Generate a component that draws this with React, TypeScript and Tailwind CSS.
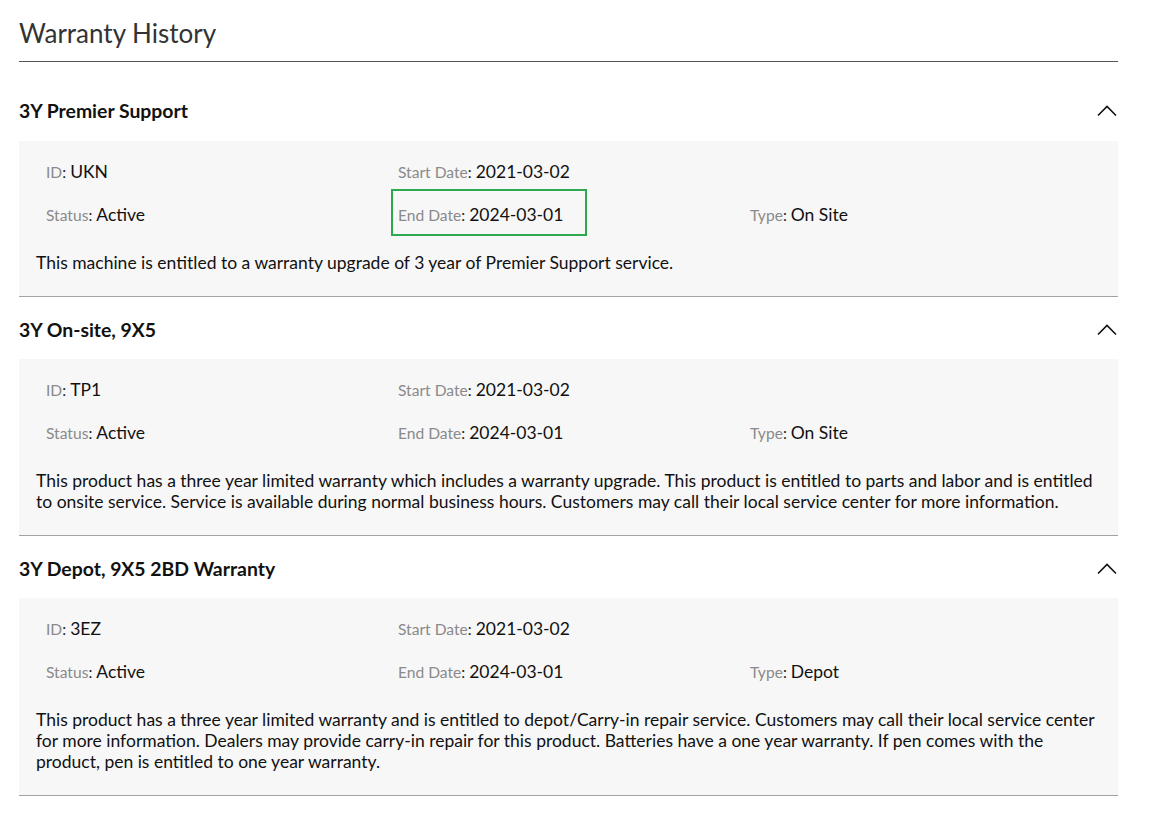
type Warranty = {
  name: string;
  id: string;
  status: string;
  start: string;
  end: string;
  type: string;
  text: string;
  highlight?: boolean;
};

const warranties: Warranty[] = [
  {
    name: "3Y Premier Support",
    id: "UKN",
    status: "Active",
    start: "2021-03-02",
    end: "2024-03-01",
    type: "On Site",
    text: "This machine is entitled to a warranty upgrade of 3 year of Premier Support service.",
    highlight: true,
  },
  {
    name: "3Y On-site, 9X5",
    id: "TP1",
    status: "Active",
    start: "2021-03-02",
    end: "2024-03-01",
    type: "On Site",
    text: "This product has a three year limited warranty which includes a warranty upgrade. This product is entitled to parts and labor and is entitled to onsite service. Service is available during normal business hours. Customers may call their local service center for more information.",
  },
  {
    name: "3Y Depot, 9X5 2BD Warranty",
    id: "3EZ",
    status: "Active",
    start: "2021-03-02",
    end: "2024-03-01",
    type: "Depot",
    text: "This product has a three year limited warranty and is entitled to depot/Carry-in repair service. Customers may call their local service center for more information. Dealers may provide carry-in repair for this product. Batteries have a one year warranty. If pen comes with the product, pen is entitled to one year warranty.",
  },
];

function Field({ label, value }: { label: string; value: string }) {
  return (
    <div className="h-6 leading-6 whitespace-nowrap">
      <span className="text-[15.6px] text-[#8a8a8a]">{label}</span>
      <span className="text-[15.6px] text-[#222]">: </span>
      <span className="text-[17.5px] text-[#111]">{value}</span>
    </div>
  );
}

function ChevronUp() {
  return (
    <svg width="20" height="12" viewBox="0 0 20 12" fill="none" className="mr-[1px]">
      <path d="M1 10.5 L10 1.5 L19 10.5" stroke="#111" strokeWidth="1.6" />
    </svg>
  );
}

function Section({ w, first }: { w: Warranty; first?: boolean }) {
  return (
    <div>
      <div className={`flex items-center justify-between ${first ? "pt-[37px] pb-[18px]" : "pt-[21px] pb-[17px]"}`}>
        <h2 className="text-[19.4px] leading-6 font-bold text-[#111]">{w.name}</h2>
        <ChevronUp />
      </div>
      <div className="bg-[#f7f7f7] border-b border-[#a3a3a3] px-[17px] pt-[19px] pb-[23px]">
        <div className="grid grid-cols-[352px_352px_1fr] gap-y-[19px] pl-[10px]">
          <Field label="ID" value={w.id} />
          <Field label="Start Date" value={w.start} />
          <div />
          <Field label="Status" value={w.status} />
          <div className="relative">
            {w.highlight && (
              <div className="absolute left-[-7px] top-[-14px] w-[196px] h-[47px] border-2 border-[#2ea84e]" />
            )}
            <Field label="End Date" value={w.end} />
          </div>
          <Field label="Type" value={w.type} />
        </div>
        <p className="mt-[25px] text-[17.5px] leading-[21px] text-[#111]">{w.text}</p>
      </div>
    </div>
  );
}

export default function App() {
  return (
    <div className="min-h-screen bg-white px-[19px] pt-[17px] font-['Lato',sans-serif]" style={{ width: 1150 }}>
      <div className="w-[1099px]">
        <h1 className="text-[26px] leading-8 text-[#333] pb-[12px] border-b border-[#555]">Warranty History</h1>
        {warranties.map((w, i) => (
          <Section key={w.name} w={w} first={i === 0} />
        ))}
      </div>
    </div>
  );
}
